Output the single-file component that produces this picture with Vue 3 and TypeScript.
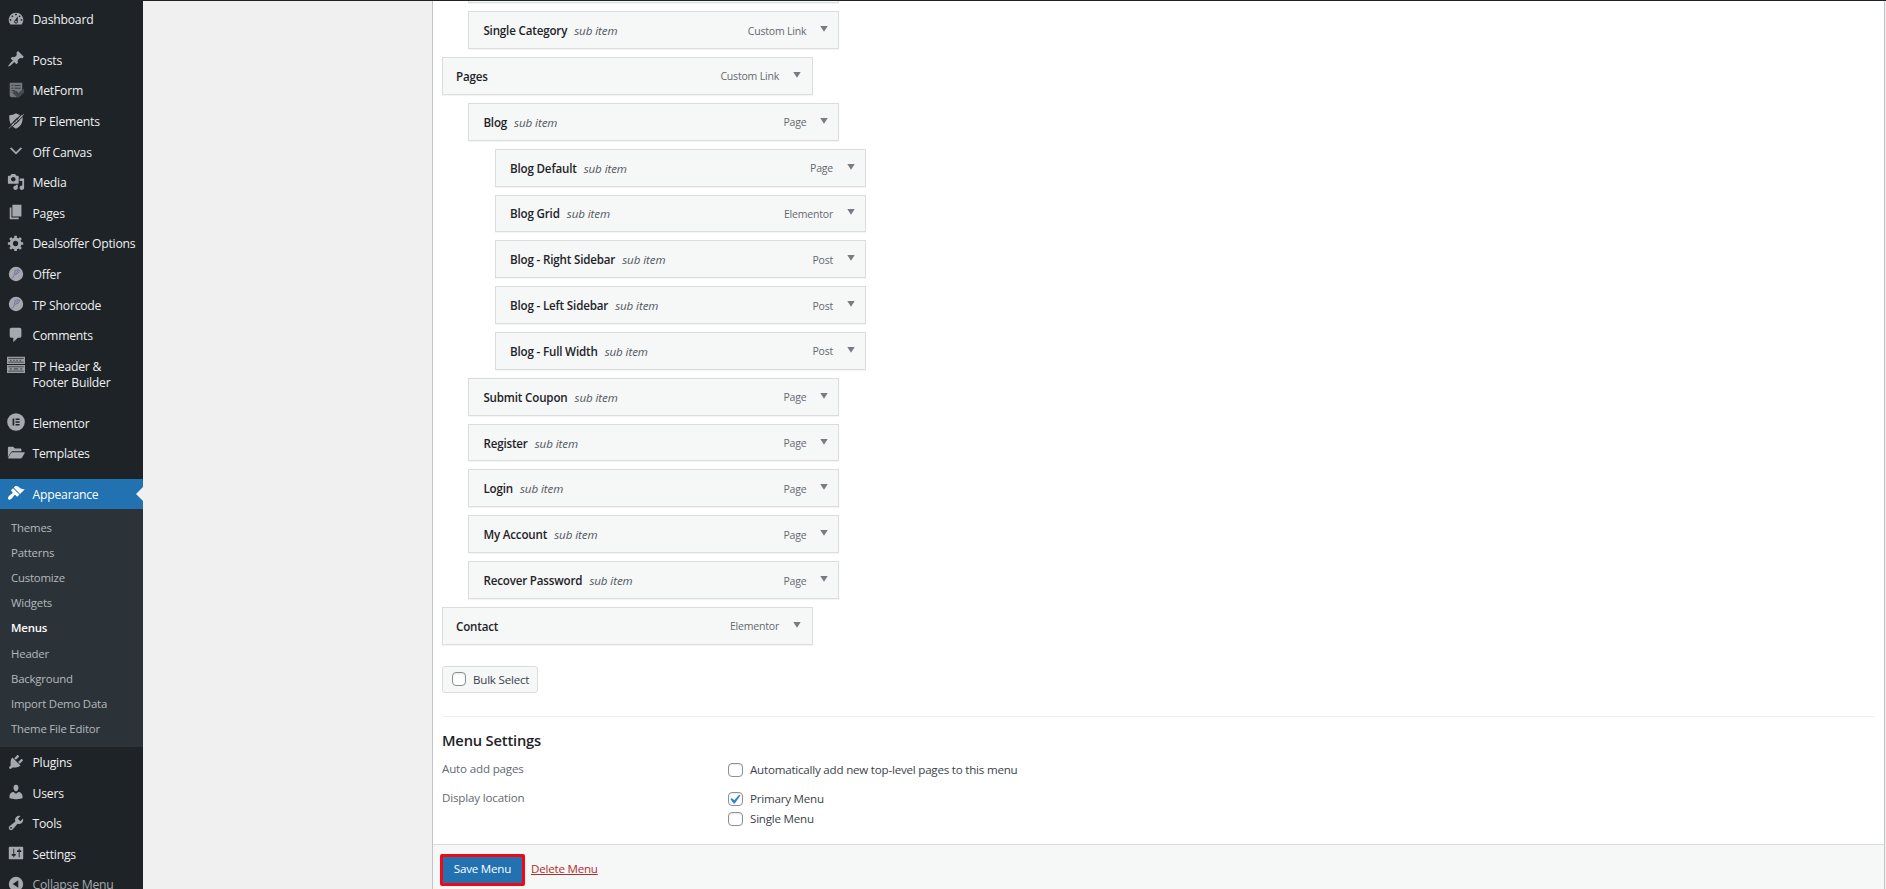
<script setup lang="ts">
import { ref } from 'vue'

interface Shape {
  d: string
  fill?: string
  stroke?: string
  width?: number
}

interface NavItem {
  label: string
  icon: Shape[]
  gapAfter?: boolean
  muted?: boolean
}

interface MenuRow {
  title: string
  type: string
  depth: number
}

const offerIcon: Shape[] = [
  { d: 'M10 2a8 8 0 1 0 0 16 8 8 0 0 0 0-16z', fill: '#a7a8ae' },
  { d: 'M5.6 15.2l3.2-4.7M8.3 6.3c3-1.4 5.6-1.2 5.6.2 0 2-3 3.9-5.3 4M9.3 6.2l-1.3 4.6M12.3 5.6l-2 4', stroke: '#7470a0', width: 1 },
]

const topItems: NavItem[] = [
  { label: 'Dashboard', gapAfter: true, icon: [{ d: 'M3.76 16h12.48A7.998 7.998 0 0 0 10 3a7.998 7.998 0 0 0-6.24 13zM10 4c.55 0 1 .45 1 1s-.45 1-1 1-1-.45-1-1 .45-1 1-1zM6 6c.55 0 1 .45 1 1s-.45 1-1 1-1-.45-1-1 .45-1 1-1zm8 0c.55 0 1 .45 1 1s-.45 1-1 1-1-.45-1-1 .45-1 1-1zm-5.37 5.55L12 7v6c0 1.1-.9 2-2 2s-2-.9-2-2c0-.57.24-1.08.63-1.45zM4 10c.55 0 1 .45 1 1s-.45 1-1 1-1-.45-1-1 .45-1 1-1zm12 0c.55 0 1 .45 1 1s-.45 1-1 1-1-.45-1-1 .45-1 1-1zm-5 3c0-.55-.45-1-1-1s-1 .45-1 1 .45 1 1 1 1-.45 1-1z' }] },
  { label: 'Posts', icon: [{ d: 'M10.44 3.02l1.82-1.82 6.36 6.35-1.83 1.82c-1.05-.68-2.48-.57-3.41.36l-.75.75c-.92.93-1.04 2.35-.35 3.41l-1.83 1.82-2.41-2.41-2.8 2.79c-.42.42-3.38 2.71-3.8 2.29s1.86-3.39 2.28-3.81l2.79-2.79L4.1 9.36l1.83-1.82c1.05.69 2.48.57 3.4-.36l.75-.75c.93-.92 1.05-2.35.36-3.41z' }] },
  { label: 'MetForm', icon: [
    { d: 'M3 2h14v8l-4 4-3-3-3 3 6 4H4.5L3 16.5z', fill: '#73777b' },
    { d: 'M5 5h2M8.5 5h6.5M5 8h2M8.5 8h6.5M5 10.8h4', stroke: '#33383d', width: 1 },
    { d: 'M8.5 10.5l3.3 3.3L19 8.5v4.5l-5.5 5h-2.5L6 12.7z', fill: '#44494d' },
  ] },
  { label: 'TP Elements', icon: [
    { d: 'M10 1.5c2 1.5 4.7 2 7.5 2 0 6.500-.5 11.500-7.500 15-7-3.500-7.500-8.500-7.500-15 2.800 0 5.500-.5 7.500-2z' },
    { d: 'M1 17.300L17.500 1.500', stroke: '#1d2327', width: 1.2 },
    { d: 'M8 13.700l1.500-3H7.400L11 7.200M12.800 6.500l-1.700 2.900h2.300L9.300 13.500', stroke: '#1d2327', width: 1 },
    { d: 'M3 19L19.500 3.200', stroke: '#1d2327', width: 1.1 },
    { d: 'M2 18.300L18.700 2.400', stroke: '#a7aaad', width: 0.9 },
  ] },
  { label: 'Off Canvas', icon: [{ d: 'M5 6l5 5 5-5 2 1-7 7-7-7z' }] },
  { label: 'Media', icon: [{ d: 'M13 11V4c0-.55-.45-1-1-1h-1.67L9 1H5L3.67 3H2c-.55 0-1 .45-1 1v7c0 .55.45 1 1 1h10c.55 0 1-.45 1-1zM7 4.5c1.38 0 2.5 1.12 2.5 2.5S8.38 9.5 7 9.5 4.5 8.38 4.5 7 5.62 4.5 7 4.5zM14 6h5v10.5c0 1.38-1.12 2.5-2.5 2.5S14 17.88 14 16.5s1.12-2.5 2.5-2.5c.17 0 .34.02.5.05V9h-3V6zm-4 8.05V13h2v3.5c0 1.38-1.12 2.5-2.5 2.5S7 17.88 7 16.5 8.12 14 9.5 14c.17 0 .34.02.5.05z' }] },
  { label: 'Pages', icon: [{ d: 'M6 15V2h10v13H6zm-1 1h8v2H3V5h2v11z' }] },
  { label: 'Dealsoffer Options', icon: [{ d: 'M18 12h-2.18c-.17.7-.44 1.35-.81 1.93l1.54 1.54-2.1 2.1-1.54-1.54c-.58.36-1.23.63-1.91.79V19H8v-2.18c-.68-.16-1.33-.43-1.91-.79l-1.54 1.54-2.12-2.12 1.54-1.54c-.36-.58-.63-1.23-.79-1.91H1V9.03h2.17c.16-.7.44-1.35.8-1.94L2.43 5.55l2.1-2.1 1.54 1.54c.58-.37 1.24-.64 1.93-.81V2h3v2.18c.68.16 1.33.43 1.91.79l1.54-1.54 2.12 2.12-1.54 1.54c.36.59.64 1.24.8 1.94H18V12zm-8.5 1.5c1.66 0 3-1.34 3-3s-1.34-3-3-3-3 1.34-3 3 1.34 3 3 3z' }] },
  { label: 'Offer', icon: offerIcon },
  { label: 'TP Shorcode', icon: offerIcon },
  { label: 'Comments', icon: [{ d: 'M5 2h9c1.1 0 2 .9 2 2v7c0 1.1-.9 2-2 2h-2l-5 5v-5H5c-1.1 0-2-.9-2-2V4c0-1.1.9-2 2-2z' }] },
  { label: 'TP Header & Footer Builder', gapAfter: true, icon: [
    { d: 'M0 .8h20v8H0zM0 10h20v9H0z', fill: '#9a9da1' },
    { d: 'M1.5 2.8h17M1.500 6.800h17M1.500 12h17M1.500 16.800h17', stroke: '#33383d', width: 0.9 },
    { d: 'M3.500 4.800h1.500M7 4.800h1.500M10.500 4.800h1.500M14 4.800h1.500M3 14.400h2.500M7.500 14.400h5M14.500 14.400h2.500', stroke: '#33383d', width: 1.1 },
  ] },
  { label: 'Elementor', icon: [
    { d: 'M10 .2a9.800 9.800 0 1 0 0 19.600 9.800 9.800 0 0 0 0-19.600z' },
    { d: 'M6.200 6h1.900v8H6.200zM9.500 6h4.500v1.700H9.500zM9.500 9.150h4.500v1.700H9.500zM9.500 12.300h4.500V14H9.500z', fill: '#1d2327' },
  ] },
  { label: 'Templates', gapAfter: true, icon: [{ d: 'M1 4.200c0-.7.5-1.200 1.200-1.200h4.600l2 2h6c.7 0 1.200.5 1.200 1.200V8H6.300c-.8 0-1.500.4-1.900 1.100L1 14.500zM6.200 9.200H19c.6 0 .9.5.6 1l-3 5.200c-.3.4-.8.6-1.300.6H1.900c-.6 0-.9-.5-.6-1l3.300-5.200c.3-.4.9-.6 1.600-.6z' }] },
]

const appearanceIcon = 'M14.48 11.06L7.41 3.99l1.5-1.5c.5-.56 2.3-.47 3.51.32 1.21.8 1.43 1.28 2.91 2.1 1.18.64 2.45 1.26 4.45.85zm-.71.71L6.7 4.7 4.93 6.47c-.39.39-.39 1.02 0 1.41l1.06 1.06c.39.39.39 1.03 0 1.42-.6.6-1.43 1.11-2.21 1.69-.35.26-.7.53-1.01.84C1.43 14.23.4 16.08 1.4 17.07c.99 1 2.84-.03 4.18-1.36.31-.31.58-.66.85-1.02.57-.78 1.08-1.61 1.69-2.21.39-.39 1.02-.39 1.41 0l1.06 1.06c.39.39 1.02.39 1.41 0z'

const subItems: string[] = ['Themes', 'Patterns', 'Customize', 'Widgets', 'Menus', 'Header', 'Background', 'Import Demo Data', 'Theme File Editor']

const bottomItems: NavItem[] = [
  { label: 'Plugins', icon: [{ d: 'M13.11 4.36L9.87 7.6 8 5.73l3.24-3.24c.35-.34 1.05-.2 1.56.32.52.51.66 1.21.31 1.55zm-8 1.77l.91-1.12 9.01 9.01-1.19.84c-.71.71-2.63 1.16-3.82 1.16H6.14L4.9 17.26c-.59.59-1.54.59-2.12 0-.59-.58-.59-1.53 0-2.12l1.24-1.24v-3.88c0-1.13.4-3.19 1.09-3.89zm7.26 3.97l3.24-3.24c.34-.35 1.04-.21 1.55.31.52.51.66 1.21.31 1.55l-3.24 3.25z' }] },
  { label: 'Users', icon: [{ d: 'M10 9.25c-2.27 0-2.73-3.44-2.73-3.44C7 4.02 7.82 2 9.97 2c2.16 0 2.98 2.02 2.71 3.81 0 0-.41 3.44-2.68 3.44zm0 2.57L12.72 10c2.39 0 4.52 2.33 4.52 4.53v2.49s-3.65 1.13-7.24 1.13c-3.65 0-7.24-1.13-7.24-1.13v-2.49c0-2.25 1.94-4.48 4.47-4.48z' }] },
  { label: 'Tools', icon: [{ d: 'M16.68 9.77c-1.34 1.34-3.3 1.67-4.95.99l-5.41 6.52c-.99.99-2.59.99-3.58 0s-.99-2.59 0-3.57l6.52-5.42c-.68-1.65-.35-3.61.99-4.95 1.28-1.28 3.12-1.62 4.72-1.06l-2.89 2.89 2.82 2.82 2.86-2.87c.53 1.58.18 3.39-1.08 4.65zM3.81 16.21c.4.39 1.04.39 1.43 0 .4-.4.4-1.04 0-1.43-.39-.4-1.03-.4-1.43 0-.39.39-.39 1.03 0 1.43z' }] },
  { label: 'Settings', icon: [{ d: 'M18 16V4c0-.55-.45-1-1-1H3c-.55 0-1 .45-1 1v12c0 .55.45 1 1 1h14c.55 0 1-.45 1-1zM8 11h1c.55 0 1 .45 1 1s-.45 1-1 1H8v1.5c0 .28-.22.5-.5.5s-.5-.22-.5-.5V13H6c-.55 0-1-.45-1-1s.45-1 1-1h1V5.5c0-.28.22-.5.5-.5s.5.22.5.5V11zm5-2h-1c-.55 0-1-.45-1-1s.45-1 1-1h1V5.5c0-.28.22-.5.5-.5s.5.22.5.5V7h1c.55 0 1 .45 1 1s-.45 1-1 1h-1v5.5c0 .28-.22.5-.5.5s-.5-.22-.5-.5V9z' }] },
  { label: 'Collapse Menu', muted: true, icon: [{ d: 'M10 2a8 8 0 1 0 0 16 8 8 0 0 0 0-16zM12.5 5.8v8.400L6.300 10z' }] },
]

const rows: MenuRow[] = [
  { title: 'Single Category', type: 'Custom Link', depth: 1 },
  { title: 'Pages', type: 'Custom Link', depth: 0 },
  { title: 'Blog', type: 'Page', depth: 1 },
  { title: 'Blog Default', type: 'Page', depth: 2 },
  { title: 'Blog Grid', type: 'Elementor', depth: 2 },
  { title: 'Blog - Right Sidebar', type: 'Post', depth: 2 },
  { title: 'Blog - Left Sidebar', type: 'Post', depth: 2 },
  { title: 'Blog - Full Width', type: 'Post', depth: 2 },
  { title: 'Submit Coupon', type: 'Page', depth: 1 },
  { title: 'Register', type: 'Page', depth: 1 },
  { title: 'Login', type: 'Page', depth: 1 },
  { title: 'My Account', type: 'Page', depth: 1 },
  { title: 'Recover Password', type: 'Page', depth: 1 },
  { title: 'Contact', type: 'Elementor', depth: 0 },
]

const bulk = ref(false)
const autoAdd = ref(false)
const primary = ref(true)
const single = ref(false)
</script>

<template>
  <div class="screen">
    <nav class="sidebar">
      <a v-for="item in topItems" :key="item.label" class="nav" :class="{ gap: item.gapAfter }">
        <svg class="icon" viewBox="0 0 20 20">
          <path v-for="(s, i) in item.icon" :key="i" :d="s.d" :fill="s.stroke ? 'none' : s.fill || '#a7aaad'" :stroke="s.stroke || 'none'" :stroke-width="s.width" fill-rule="evenodd" />
        </svg>
        <span class="nav-label">{{ item.label }}</span>
      </a>
      <a class="nav current">
        <svg class="icon" viewBox="0 0 20 20"><path :d="appearanceIcon" fill="#fff" /></svg>
        <span class="nav-label">Appearance</span>
      </a>
      <div class="submenu">
        <a v-for="s in subItems" :key="s" class="sub" :class="{ active: s === 'Menus' }">{{ s }}</a>
      </div>
      <a v-for="item in bottomItems" :key="item.label" class="nav" :class="{ muted: item.muted }">
        <svg class="icon" viewBox="0 0 20 20">
          <path v-for="(s, i) in item.icon" :key="i" :d="s.d" fill="#a7aaad" fill-rule="evenodd" />
        </svg>
        <span class="nav-label">{{ item.label }}</span>
      </a>
    </nav>

    <main class="panel">
      <div class="body">
        <div class="row depth-1 clipped"></div>
        <div v-for="row in rows" :key="row.title" class="row" :class="'depth-' + row.depth">
          <span class="title">{{ row.title }}</span>
          <span v-if="row.depth" class="sub-label">sub item</span>
          <span class="type">{{ row.type }}</span>
          <svg class="arrow" viewBox="0 0 8 6"><path d="M.3 0h7.4L4 5.8z" fill="#787c82" /></svg>
        </div>

        <label class="bulk"><input v-model="bulk" type="checkbox" class="check" />Bulk Select</label>

        <section class="settings">
          <h3>Menu Settings</h3>
          <div class="setting">
            <span class="legend">Auto add pages</span>
            <div class="options">
              <label class="option"><input v-model="autoAdd" type="checkbox" class="check" />Automatically add new top-level pages to this menu</label>
            </div>
          </div>
          <div class="setting">
            <span class="legend">Display location</span>
            <div class="options">
              <label class="option"><input v-model="primary" type="checkbox" class="check" />
                <svg v-if="primary" class="tick" viewBox="0 0 20 20"><path d="M14.83 4.89l1.34.94-5.81 8.38H9.02L5.78 9.67l1.34-1.25 2.57 2.4z" fill="#3582c4" /></svg>Primary Menu</label>
              <label class="option"><input v-model="single" type="checkbox" class="check" />Single Menu</label>
            </div>
          </div>
        </section>
      </div>
      <footer class="actions">
        <span class="highlight"><button class="save">Save Menu</button></span>
        <a class="delete">Delete Menu</a>
      </footer>
    </main>
  </div>
</template>

<style>
body {
  margin: 0;
  overflow: hidden;
  background: #f0f0f1;
}
</style>

<style scoped>
.screen {
  box-sizing: border-box;
  display: flex;
  width: 1886px;
  height: 889px;
  border-top: 1px solid #1d2327;
  overflow: hidden;
  background: #f0f0f1;
  color: #3c434a;
  font-family: "Open Sans", "Noto Sans", sans-serif;
  font-size: 11.6px;
  letter-spacing: -0.22px;
}
.sidebar {
  box-sizing: border-box;
  flex: none;
  width: 143px;
  height: 888px;
  padding-top: 3px;
  overflow: hidden;
  background: #1d2327;
}
.nav {
  position: relative;
  display: flex;
  align-items: flex-start;
  min-height: 30.6px;
  color: #f0f0f1;
  font-size: 12.2px;
  line-height: 16.2px;
}
.nav.gap {
  margin-bottom: 10px;
}
.nav-label {
  box-sizing: border-box;
  width: 106px;
  padding: 8.3px 0 6.1px;
}
.nav.gap .nav-label {
  width: 90px;
}
.icon {
  flex: none;
  width: 18px;
  height: 18px;
  margin: 5.8px 7.5px 0 7px;
}
.current {
  background: #2271b1;
  color: #fff;
}
.current::after {
  content: "";
  position: absolute;
  right: 0;
  top: 8px;
  border: 7.2px solid transparent;
  border-left-width: 0;
  border-right-color: #f0f0f1;
}
.muted {
  color: #a7aaad;
}
.submenu {
  padding: 5.6px 0 5.4px;
  background: #2c3338;
}
.sub {
  display: block;
  padding-left: 11px;
  height: 25.2px;
  line-height: 25.6px;
  color: #b4b9be;
  font-size: 11.4px;
  letter-spacing: -0.2px;
}
.sub.active {
  color: #fff;
  font-weight: 600;
}
.panel {
  box-sizing: border-box;
  display: flex;
  flex-direction: column;
  width: 1453px;
  height: 888px;
  margin-left: 289px;
  border: 1px solid #c3c4c7;
  border-width: 0 1px;
  background: #fff;
}
.body {
  box-sizing: border-box;
  flex: none;
  height: 843px;
  padding: 0 9px;
}
.row {
  box-sizing: border-box;
  display: flex;
  align-items: center;
  width: 371px;
  height: 37.83px;
  margin-bottom: 8px;
  padding: 1px 11px 0 13px;
  border: 1px solid #dcdcde;
  background: #f6f7f7;
  box-shadow: 0 1px 1px rgba(0, 0, 0, 0.04);
}
.row.clipped {
  height: 2.2px;
  padding: 0;
  border-top: 0;
}
.depth-1 {
  margin-left: 26.4px;
  padding: 1px 10px 0 14px;
}
.depth-2 {
  margin-left: 53px;
  padding: 1px 10px 0 14px;
}
.title {
  color: #1d2327;
  font-weight: 600;
  letter-spacing: -0.17px;
}
.sub-label {
  margin-left: 7px;
  color: #50575e;
  font-style: italic;
  letter-spacing: -0.1px;
}
.type {
  margin-left: auto;
  color: #646970;
  font-size: 10.5px;
  letter-spacing: -0.19px;
}
.arrow {
  width: 8px;
  height: 6px;
  margin: 0 0 3px 14px;
}
.bulk {
  box-sizing: border-box;
  display: flex;
  align-items: center;
  width: 96px;
  height: 27px;
  margin-top: 21px;
  padding-left: 9px;
  border: 1px solid #dcdcde;
  border-radius: 3px;
  background: #f6f7f7;
}
.check {
  appearance: none;
  box-sizing: border-box;
  flex: none;
  width: 15px;
  height: 14px;
  margin: 0 7px 0 0;
  border: 1px solid #8c8f94;
  border-radius: 4px;
  background: #fff;
  box-shadow: inset 0 1px 2px rgba(0, 0, 0, 0.1);
}
.bulk .check {
  width: 14px;
}
.settings {
  margin-top: 23px;
  border-top: 1px solid #f0f0f1;
}
h3 {
  margin: 13px 0 0;
  color: #1d2327;
  font-size: 14.7px;
  font-weight: 600;
  line-height: 20px;
  letter-spacing: -0.18px;
}
.setting {
  display: flex;
  margin-top: 10px;
  line-height: 20px;
}
.setting + .setting {
  margin-top: 9px;
}
.legend {
  width: 286px;
  color: #646970;
  line-height: 18px;
  letter-spacing: -0.17px;
}
.option {
  position: relative;
  display: flex;
  align-items: center;
  height: 20px;
}
.tick {
  position: absolute;
  left: -3px;
  top: 1px;
  width: 19px;
  height: 19px;
}
.actions {
  display: flex;
  flex: none;
  align-items: flex-start;
  height: 45px;
  padding: 9px 0 0 7px;
  box-sizing: border-box;
  border-top: 1px solid #dcdcde;
  background: #f6f7f7;
  line-height: 30px;
}
.highlight {
  box-sizing: border-box;
  display: flex;
  width: 85px;
  height: 32px;
  border: 3px solid #f00914;
  border-radius: 2px;
}
.save {
  flex: 1;
  padding: 0 0 2px;
  border: 0;
  background: #2271b1;
  color: #fff;
  font: inherit;
  line-height: 24px;
  letter-spacing: -0.22px;
}
.delete {
  margin-left: 6px;
  color: #b32d2e;
  text-decoration: underline;
}
</style>
